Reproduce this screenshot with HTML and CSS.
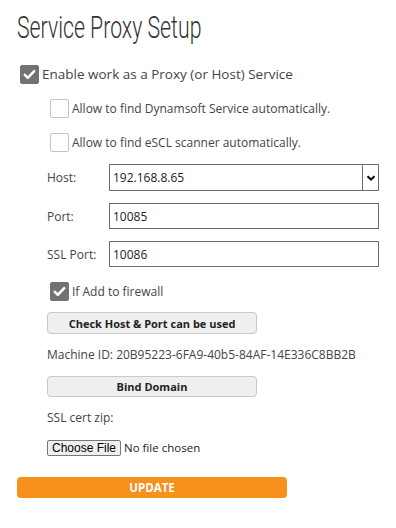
FILE: index.html
```html
<!DOCTYPE html>
<html lang="en">
<head>
    <meta charset="UTF-8" />
    <title>Service Proxy Setup</title>
    <link rel="stylesheet" href="styles.css">
</head>
<body>
    <div class="setup">
        <h1 class="title"><span>Service Proxy Setup</span></h1>

        <label class="check main-check">
            <span class="box checked">
                <svg viewBox="0 0 20 20" width="19" height="19"><path d="M4.5 10.5l3.5 3.5 7.5-8" fill="none" stroke="#fff" stroke-width="3" stroke-linecap="round" stroke-linejoin="round"/></svg>
            </span>
            Enable work as a Proxy (or Host) Service
        </label>

        <div class="options">
            <label class="check sub-check">
                <span class="box"></span>
                Allow to find Dynamsoft Service automatically.
            </label>
            <label class="check sub-check">
                <span class="box"></span>
                Allow to find eSCL scanner automatically.
            </label>

            <div class="field">
                <span class="field-label">Host:</span>
                <div class="select">
                    <span class="select-value">192.168.8.65</span>
                    <span class="select-arrow">
                        <svg viewBox="0 0 10 10" width="10" height="10"><path d="M1.5 3.2l3.5 3.3 3.5-3.3" fill="none" stroke="#111" stroke-width="2.2"/></svg>
                    </span>
                </div>
            </div>
            <div class="field">
                <span class="field-label">Port:</span>
                <input class="text-input" type="text" value="10085">
            </div>
            <div class="field">
                <span class="field-label">SSL Port:</span>
                <input class="text-input" type="text" value="10086">
            </div>

            <label class="check sub-check firewall">
                <span class="box checked">
                    <svg viewBox="0 0 20 20" width="19" height="19"><path d="M4.5 10.5l3.5 3.5 7.5-8" fill="none" stroke="#fff" stroke-width="3" stroke-linecap="round" stroke-linejoin="round"/></svg>
                </span>
                If Add to firewall
            </label>

            <button class="plain-btn check-btn">Check Host &amp; Port can be used</button>
            <div class="machine-id">Machine ID: 20B95223-6FA9-40b5-84AF-14E336C8BB2B</div>
            <button class="plain-btn bind-btn">Bind Domain</button>
            <div class="cert-label">SSL cert zip:</div>
            <input class="file-input" type="file">
        </div>

        <button class="update-btn">UPDATE</button>
    </div>
</body>
</html>
```

FILE: styles.css
```css
* {
    box-sizing: border-box;
}

body {
    margin: 0;
    font-family: 'Open Sans', 'Liberation Sans', sans-serif;
    color: #444;
    background: #fff;
}

.setup {
    padding: 10px 0 0 17px;
    display: flex;
    flex-direction: column;
    align-items: flex-start;
}

.title {
    margin: 0;
    height: 38px;
    font-family: Roboto, 'Liberation Sans', sans-serif;
    font-weight: 300;
    font-size: 31px;
    line-height: 36px;
    color: #333;
    white-space: nowrap;
}

.title span {
    display: inline-block;
    transform: scaleX(0.686);
    transform-origin: left center;
}

.check {
    display: flex;
    align-items: center;
    height: 20px;
}

.box {
    width: 19px;
    height: 19px;
    border: 1px solid #c4c4c4;
    border-radius: 2px;
    background: #fff;
    margin-right: 3px;
    display: flex;
    align-items: center;
    justify-content: center;
}

.box.checked {
    background: #727272;
    border-color: #727272;
}

.box svg {
    display: block;
}

.main-check {
    margin: 16px 0 0 3px;
    font-size: 13.5px;
    color: #444;
}

.options {
    margin-left: 30px;
    display: flex;
    flex-direction: column;
    align-items: flex-start;
}

.sub-check {
    margin: 14px 0 0 3px;
    font-size: 12px;
    color: #444;
}

.field {
    display: flex;
    align-items: center;
    margin-top: 12px;
}

.field-label {
    width: 62px;
    font-size: 12px;
    color: #444;
}

.select,
.text-input {
    width: 270px;
    height: 26px;
    border: 1px solid #6e6e6e;
    background: #fff;
}

.select {
    height: 27px;
    display: flex;
    align-items: center;
}

.select-value,
.text-input {
    font-family: 'Open Sans', 'Liberation Sans', sans-serif;
    font-size: 12px;
    color: #222;
}

.select-value {
    flex: 1;
    padding-left: 3px;
}

.select-arrow {
    width: 16px;
    height: 100%;
    border-left: 1px solid #6e6e6e;
    display: flex;
    align-items: center;
    justify-content: center;
}

.text-input {
    padding: 0 3px;
    outline: none;
}

.firewall {
    margin-top: 14px;
}

.plain-btn {
    width: 210px;
    height: 22px;
    padding: 0;
    border: 1px solid #c9c9c9;
    border-radius: 4px;
    background: #efefef;
    font-family: 'Open Sans', 'Liberation Sans', sans-serif;
    font-weight: bold;
    font-size: 11px;
    color: #222;
}

.check-btn {
    margin-top: 11px;
}

.machine-id,
.cert-label {
    margin-top: 11px;
    height: 20px;
    line-height: 20px;
    font-size: 12px;
    color: #444;
}

.bind-btn {
    margin-top: 11px;
    height: 21px;
}

.file-input {
    margin-top: 12px;
    font-family: 'Open Sans', 'Liberation Sans', sans-serif;
    font-size: 11.5px;
    color: #222;
}

.file-input::file-selector-button {
    font-family: 'Liberation Sans', Arial, sans-serif;
    font-size: 12px;
    height: 16px;
    padding: 0 4px;
    margin-right: 3px;
    border: 1px solid #767676;
    border-radius: 2px;
    background: #efefef;
    color: #000;
}

.update-btn {
    margin-top: 21px;
    width: 270px;
    height: 21px;
    border: none;
    border-radius: 4px;
    background: #f8901c;
    color: #fff;
    font-family: 'Open Sans', 'Liberation Sans', sans-serif;
    font-weight: bold;
    font-size: 11.5px;
}
```
